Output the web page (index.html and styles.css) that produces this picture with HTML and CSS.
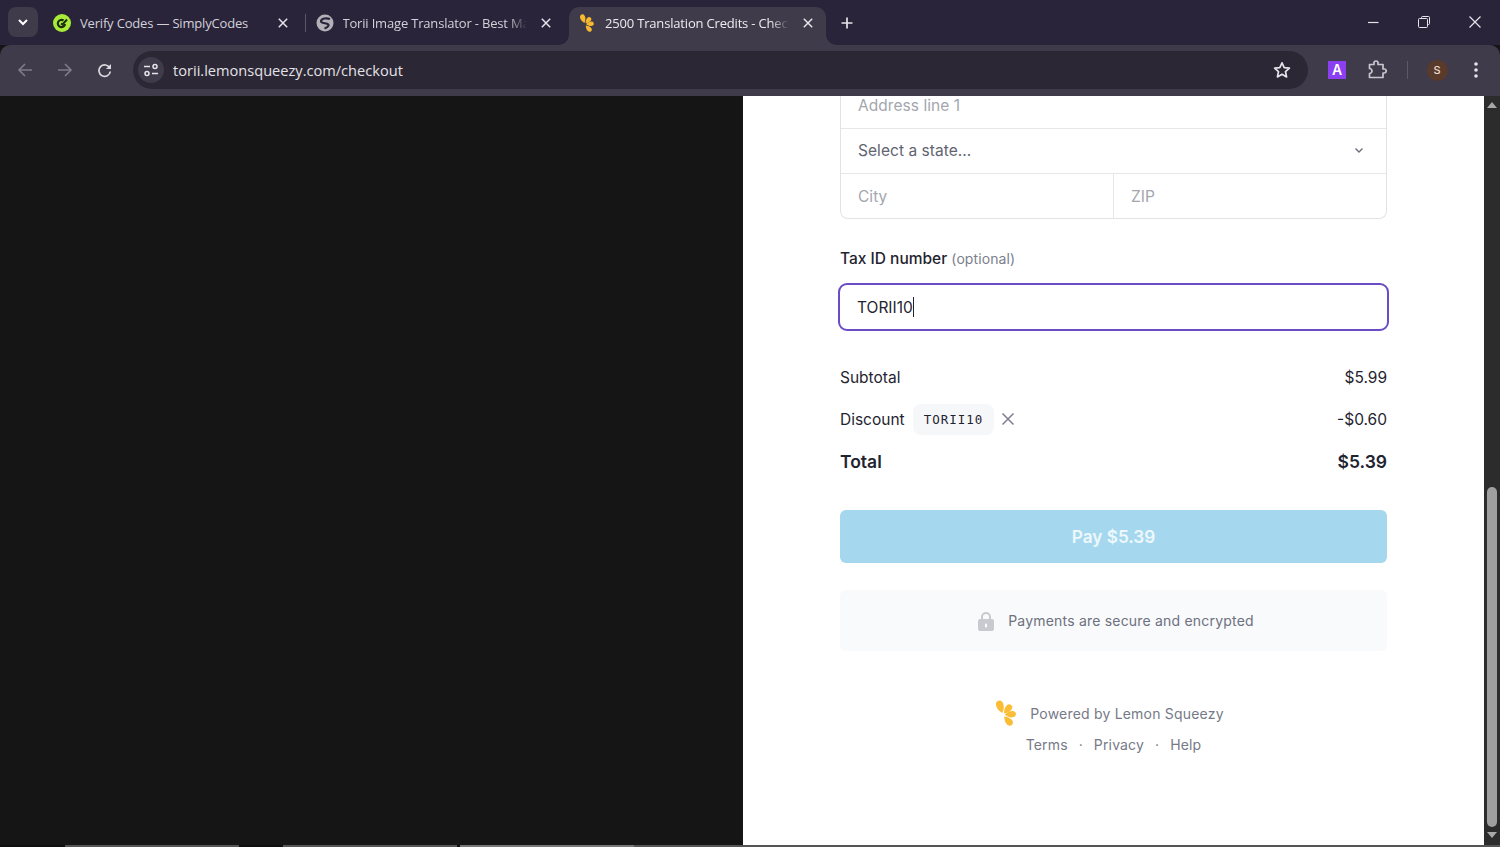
FILE: index.html
```html
<!DOCTYPE html>
<html lang="en">
<head>
    <meta charset="UTF-8">
    <title>2500 Translation Credits - Checkout</title>
    <link rel="stylesheet" href="styles.css">
</head>
<body>
    <!-- browser chrome -->
    <div class="tabstrip">
        <button class="tab-search">
            <svg width="12" height="12" viewBox="0 0 12 12"><path d="M2 4l4 4 4-4" fill="none" stroke="#fff" stroke-width="2"/></svg>
        </button>
        <div class="tabs">
            <div class="tab">
                <svg class="favicon" viewBox="0 0 18 18"><circle cx="9" cy="9" r="9" fill="#a8ec38"/><path d="M10.500 6.500A3.600 3.600 0 1 0 12 10" fill="none" stroke="#1d2a12" stroke-width="2.200"/><path d="M8 9.500l1.500 1L14 5.500" fill="none" stroke="#1d2a12" stroke-width="2"/></svg>
                <span class="tab-title">Verify Codes — SimplyCodes</span>
                <svg class="tab-close" width="10" height="10" viewBox="0 0 10 10"><path d="M.8.800l8.400 8.400M9.200.800L.8 9.200" stroke="#e6e4ea" stroke-width="1.500"/></svg>
            </div>
            <div class="tab tab-sep">
                <svg class="favicon" viewBox="0 0 18 18"><circle cx="9" cy="9" r="8.500" fill="#b2b1b7"/><path d="M14 5C10 3.500 5.500 4.500 5 7c-.4 2 3.500 2 6 2.800 2.500.8 2 3.200-2.500 4.700" fill="none" stroke="#29243a" stroke-width="2.200"/></svg>
                <span class="tab-title">Torii Image Translator - Best Ma</span>
                <svg class="tab-close" width="10" height="10" viewBox="0 0 10 10"><path d="M.8.800l8.400 8.400M9.200.800L.8 9.200" stroke="#e6e4ea" stroke-width="1.500"/></svg>
            </div>
            <div class="tab tab-active">
                <svg class="favicon" viewBox="0 0 20 26">
                    <g fill="#f7b92d">
                        <path transform="translate(7 15) rotate(-18) scale(1.100)" d="M0-2C-3-5-4.500-10-2.500-12.500C-1-14 1.500-14 2.500-12.500C4.500-10 3-5 0-2z"/>
                        <path transform="translate(7 15) rotate(39) scale(.95)" d="M0-2C-3-5-4.500-10-2.500-12.500C-1-14 1.500-14 2.500-12.500C4.500-10 3-5 0-2z"/>
                        <path transform="translate(7 15) rotate(85) scale(.95)" d="M0-2C-3-5-4.500-10-2.500-12.500C-1-14 1.500-14 2.500-12.500C4.500-10 3-5 0-2z"/>
                        <path transform="translate(7 15) rotate(138) scale(.98)" d="M0-2C-3-5-4.500-10-2.500-12.500C-1-14 1.500-14 2.500-12.500C4.500-10 3-5 0-2z"/>
                    </g>
                </svg>
                <span class="tab-title">2500 Translation Credits - Check</span>
                <svg class="tab-close" width="10" height="10" viewBox="0 0 10 10"><path d="M.8.800l8.400 8.400M9.200.800L.8 9.200" stroke="#e6e4ea" stroke-width="1.500"/></svg>
            </div>
        </div>
        <svg class="new-tab" width="14" height="14" viewBox="0 0 14 14"><path d="M7 1.500v11M1.500 7h11" stroke="#e6e4ea" stroke-width="1.700"/></svg>
        <div class="window-controls">
            <svg width="12" height="12" viewBox="0 0 12 12"><path d="M1 6.500h10.500" stroke="#e6e4ea" stroke-width="1.200"/></svg>
            <svg width="12" height="12" viewBox="0 0 12 12"><path d="M3.500 2.500V1.500q0-1 1-1h6q1 0 1 1v6q0 1-1 1h-1" fill="none" stroke="#e6e4ea"/><rect x="0.500" y="2.500" width="9" height="9" rx="1" fill="none" stroke="#e6e4ea"/></svg>
            <svg width="12" height="12" viewBox="0 0 12 12"><path d="M.5.500l11 11M11.500.500l-11 11" stroke="#e6e4ea" stroke-width="1.200"/></svg>
        </div>
    </div>
    <div class="toolbar">
        <div class="tool">
            <svg width="16" height="16" viewBox="0 0 16 16"><path d="M15 8H2M8 2L2 8l6 6" fill="none" stroke="#7f7c88" stroke-width="1.600"/></svg>
        </div>
        <div class="tool">
            <svg width="16" height="16" viewBox="0 0 16 16"><path d="M1 8h13M8 2l6 6-6 6" fill="none" stroke="#7f7c88" stroke-width="1.600"/></svg>
        </div>
        <div class="tool">
            <svg width="16" height="16" viewBox="0 0 16 16"><path d="M12.700 6A5.700 5.700 0 1 0 13.300 9.500" fill="none" stroke="#dcdae0" stroke-width="1.700"/><path d="M14 2v5H9z" fill="#dcdae0"/></svg>
        </div>
        <div class="omnibox">
            <span class="site-info">
                <svg width="16" height="16" viewBox="0 0 16 16"><g fill="none" stroke="#e6e4ea" stroke-width="1.500"><path d="M1 4.500h6M9 11.500h6"/><circle cx="12" cy="4.500" r="2"/><circle cx="4" cy="11.500" r="2"/></g></svg>
            </span>
            <span class="url">torii.lemonsqueezy.com/checkout</span>
            <svg class="star" width="18" height="18" viewBox="0 0 18 18"><path d="M9 1.800l2.200 4.800 5.200.6-3.900 3.500 1.100 5.200L9 13.300l-4.600 2.600 1.100-5.200-3.900-3.500 5.200-.6z" fill="none" stroke="#e6e4ea" stroke-width="1.700" stroke-linejoin="round"/></svg>
        </div>
        <div class="tool tool-ext"><span class="ext-a">A</span></div>
        <div class="tool tool-puzzle">
            <svg width="20" height="20" viewBox="0 0 20 20"><path d="M2.500 4.500h4.500V3a2 2 0 0 1 4 0v1.500h5v4.500h1.200a2 2 0 0 1 0 4h-1.200v4.500h-13.500V13.500a2.500 2.500 0 0 0 0-5z" fill="none" stroke="#c9c7ce" stroke-width="1.700" stroke-linejoin="round"/></svg>
        </div>
        <span class="tool-sep"></span>
        <div class="tool"><span class="avatar">S</span></div>
        <div class="tool tool-dots">
            <svg width="4" height="18" viewBox="0 0 4 18"><g fill="#e6e4ea"><circle cx="2" cy="3" r="1.800"/><circle cx="2" cy="9" r="1.800"/><circle cx="2" cy="15" r="1.800"/></g></svg>
        </div>
    </div>

    <!-- checkout page -->
    <div class="viewport">
        <div class="side-dark"></div>
        <div class="checkout">
            <div class="address-group">
                <div class="field field-clipped"><span class="placeholder">Address line 1</span></div>
                <div class="field field-select">
                    <span>Select a state...</span>
                    <svg width="10" height="10" viewBox="0 0 10 10"><path d="M1.500 3.500L5 7l3.500-3.500" fill="none" stroke="#6b6f7b" stroke-width="1.400"/></svg>
                </div>
                <div class="field-split">
                    <div class="field"><span class="placeholder">City</span></div>
                    <div class="field field-zip"><span class="placeholder">ZIP</span></div>
                </div>
            </div>

            <label class="tax-label">Tax ID number <span class="optional">(optional)</span></label>
            <div class="tax-input"><span>TORII10</span><i class="caret"></i></div>

            <div class="summary">
                <div class="summary-row">
                    <span>Subtotal</span>
                    <span>$5.99</span>
                </div>
                <div class="summary-row">
                    <span class="discount">
                        Discount
                        <code class="coupon">TORII10</code>
                        <svg width="14" height="14" viewBox="0 0 14 14"><path d="M1.500 1.500l11 11M12.500 1.500l-11 11" stroke="#7f7d92" stroke-width="1.500"/></svg>
                    </span>
                    <span>-$0.60</span>
                </div>
                <div class="summary-row summary-total">
                    <span>Total</span>
                    <span>$5.39</span>
                </div>
            </div>

            <button class="pay">Pay $5.39</button>

            <div class="secure">
                <svg width="18" height="20" viewBox="0 0 18 20"><path d="M5 9V6a4 4 0 0 1 8 0v3" fill="none" stroke="#c8cacf" stroke-width="2"/><rect x="1" y="8" width="16" height="12" rx="2" fill="#c8cacf"/><rect x="8" y="12.500" width="2" height="4" rx="1" fill="#fff"/></svg>
                <span>Payments are secure and encrypted</span>
            </div>

            <div class="powered">
                <svg width="20" height="26" viewBox="0 0 20 26">
                    <g fill="#fbbd35">
                        <path transform="translate(7 15) rotate(-18) scale(1.100)" d="M0-2C-3-5-4.500-10-2.500-12.500C-1-14 1.500-14 2.500-12.500C4.500-10 3-5 0-2z"/>
                        <path transform="translate(7 15) rotate(39) scale(.95)" d="M0-2C-3-5-4.500-10-2.500-12.500C-1-14 1.500-14 2.500-12.500C4.500-10 3-5 0-2z"/>
                        <path transform="translate(7 15) rotate(85) scale(.95)" d="M0-2C-3-5-4.500-10-2.500-12.500C-1-14 1.500-14 2.500-12.500C4.500-10 3-5 0-2z"/>
                        <path transform="translate(7 15) rotate(138) scale(.98)" d="M0-2C-3-5-4.500-10-2.500-12.500C-1-14 1.500-14 2.500-12.500C4.500-10 3-5 0-2z"/>
                    </g>
                </svg>
                <span>Powered by Lemon Squeezy</span>
            </div>
            <div class="legal">
                <a>Terms</a><span>·</span><a>Privacy</a><span>·</span><a>Help</a>
            </div>
        </div>
        <div class="scrollbar">
            <span class="arrow-up"></span>
            <span class="thumb"></span>
            <span class="arrow-down"></span>
        </div>
    </div>

    <!-- sliver of the taskbar -->
    <div class="taskbar">
        <span class="task-a"></span><span class="task-b"></span>
        <span class="task-c"></span><span class="task-b"></span>
        <span class="task-d"></span><span class="task-e"></span>
        <span class="task-f"></span>
    </div>
</body>
</html>
```

FILE: styles.css
```css
* {
    box-sizing: border-box;
}
body {
    margin: 0;
    height: 847px;
    overflow: hidden;
    background: #151515;
    font-family: Inter, sans-serif;
    color: #1f2430;
}

/* tab strip */
.tabstrip {
    display: flex;
    align-items: flex-start;
    height: 45px;
    background: #29243a;
    padding-top: 7px;
    padding-left: 8px;
}
.tab-search {
    width: 30px;
    height: 30px;
    border: none;
    border-radius: 8px;
    background: #3f3b4b;
    padding: 0;
    display: flex;
    align-items: center;
    justify-content: center;
}
.tabs {
    display: flex;
    gap: 5.500px;
    margin-left: 6px;
}
.tab {
    position: relative;
    display: flex;
    align-items: center;
    gap: 9px;
    width: 257px;
    height: 38px;
    padding: 0 9px 6px;
    border-radius: 10px 10px 0 0;
    font-family: "Open Sans", sans-serif;
    font-size: 13px;
    color: #d3d1d8;
}
.tab-active {
    background: #3f3b4b;
    color: #ecebef;
}
.tab-active::before,
.tab-active::after {
    content: "";
    position: absolute;
    bottom: 0;
    width: 10px;
    height: 10px;
    background: radial-gradient(circle at 0 0, transparent 9.500px, #3f3b4b 10px);
}
.tab-active::before {
    left: -10px;
}
.tab-active::after {
    right: -10px;
    transform: scaleX(-1);
}
.tab-sep::before {
    content: "";
    position: absolute;
    left: -2px;
    top: 7px;
    width: 1px;
    height: 18px;
    background: #5c586a;
}
.favicon {
    width: 18px;
    height: 18px;
    flex: none;
}
.tab-title {
    flex: 1;
    min-width: 0;
    white-space: nowrap;
    letter-spacing: -0.18px;
    -webkit-mask-image: linear-gradient(to right, #000 90%, transparent);
    mask-image: linear-gradient(to right, #000 90%, transparent);
}
.tab:first-child .tab-title {
    -webkit-mask-image: none;
    mask-image: none;
}
.tab-close {
    flex: none;
    margin: 0 4px 0 5px;
}
.new-tab {
    margin: 9px 0 0 14px;
}
.window-controls {
    display: flex;
    gap: 39px;
    margin-left: auto;
    padding: 9px 19px 0 0;
}

/* toolbar */
.toolbar {
    display: flex;
    align-items: center;
    height: 51px;
    padding: 0 4px 1px 5px;
    background: #3f3b4b;
    border-radius: 10px 10px 0 0;
}
.tool {
    width: 40px;
    height: 38px;
    flex: none;
    display: flex;
    align-items: center;
    justify-content: center;
}
.tool-ext {
    margin-left: 9px;
    margin-right: 1px;
}
.tool-puzzle svg {
    margin-left: -2px;
}
.tool-dots {
    margin-left: -1px;
}
.tool-sep {
    width: 1px;
    height: 18px;
    margin: 0 9px 0 9px;
    background: #5c586a;
}
.omnibox {
    flex: 1;
    display: flex;
    align-items: center;
    height: 38px;
    margin-left: 8px;
    padding: 0 17px 0 5px;
    border-radius: 19px;
    background: #2b2735;
}
.site-info {
    width: 26px;
    height: 26px;
    border-radius: 50%;
    background: #3f3b4b;
    display: flex;
    align-items: center;
    justify-content: center;
}
.url {
    flex: 1;
    margin-left: 9px;
    font-family: "Open Sans", sans-serif;
    font-size: 14.600px;
    color: #e4e2e8;
}
.ext-a {
    width: 18px;
    height: 18px;
    background: #8a3ff0;
    color: #fff;
    font-size: 14px;
    font-weight: 600;
    text-align: center;
    line-height: 18px;
}
.avatar {
    width: 21px;
    height: 21px;
    border-radius: 50%;
    background: #5a3a2a;
    color: #e8dcd2;
    font-size: 11px;
    font-weight: 500;
    text-align: center;
    line-height: 21px;
}

/* checkout page */
.viewport {
    display: flex;
    height: 749px;
}
.side-dark {
    width: 743px;
    background: #151515;
}
.checkout {
    flex: 1;
    background: #fff;
    padding: 0 97px;
    font-size: 15.500px;
    overflow: hidden;
}
.address-group {
    border: 1px solid #e2e3e6;
    border-top: none;
    border-radius: 0 0 8px 8px;
    color: #5f6470;
}
.field {
    display: flex;
    align-items: center;
    height: 44px;
    padding: 0 17px;
    letter-spacing: 0.05px;
}
.field-clipped {
    height: 33px;
    padding-bottom: 13px;
    align-items: flex-end;
    overflow: hidden;
    border-bottom: 1px solid #e6e7ea;
}
.field-select {
    height: 45px;
    padding-bottom: 2px;
    justify-content: space-between;
    border-bottom: 1px solid #e6e7ea;
    padding-right: 22px;
}
.field-split {
    display: flex;
}
.field-split .field {
    flex: 1;
}
.field-zip {
    border-left: 1px solid #e6e7ea;
}
.placeholder {
    color: #a3a6ae;
}
.tax-label {
    display: block;
    margin-top: 28px;
    line-height: 24px;
    font-weight: 500;
}
.optional {
    color: #7c808c;
    font-size: 14px;
    font-weight: 400;
    line-height: 1;
    letter-spacing: 0.1px;
}
.tax-input {
    display: flex;
    align-items: center;
    height: 48px;
    margin: 12px -2px 0;
    padding: 0 17px;
    border: 2px solid #6a4dc4;
    border-radius: 9px;
}
.caret {
    width: 1px;
    height: 20px;
    background: #1f2430;
}
.summary {
    margin-top: 25px;
}
.summary-row {
    display: flex;
    align-items: center;
    justify-content: space-between;
    height: 42px;
}
.discount {
    display: flex;
    align-items: center;
}
.coupon {
    margin: 0 7px 0 8px;
    padding: 0 11px;
    height: 31px;
    line-height: 31px;
    border-radius: 8px;
    background: #f6f7f9;
    font-family: "DejaVu Sans Mono", monospace;
    font-size: 12.500px;
    letter-spacing: 1px;
}
.summary-total {
    font-size: 17.500px;
    font-weight: 600;
}
.pay {
    display: block;
    width: 100%;
    height: 53px;
    margin-top: 28px;
    border: none;
    border-radius: 6px;
    background: #a5d8ef;
    color: #eef8fc;
    font-family: inherit;
    font-size: 17.200px;
    font-weight: 600;
}
.secure {
    display: flex;
    align-items: center;
    justify-content: center;
    gap: 13px;
    height: 61px;
    margin-top: 27px;
    padding-left: 4px;
    border-radius: 6px;
    background: #f9fafb;
    color: #6d7180;
    font-size: 14px;
    letter-spacing: 0.2px;
}
.powered {
    display: flex;
    align-items: center;
    justify-content: center;
    gap: 14px;
    height: 26px;
    margin-top: 49px;
    padding-right: 7px;
    color: #767a88;
    font-size: 14px;
    letter-spacing: 0.2px;
}
.legal {
    display: flex;
    justify-content: center;
    gap: 11px;
    margin-top: 7px;
    line-height: 24px;
    color: #767a88;
    font-size: 14px;
    letter-spacing: 0.15px;
}

/* scrollbar */
.scrollbar {
    display: flex;
    flex-direction: column;
    align-items: center;
    width: 16px;
    background: #2c2c2c;
}
.arrow-up,
.arrow-down {
    width: 0;
    height: 0;
    border-left: 5px solid transparent;
    border-right: 5px solid transparent;
}
.arrow-up {
    margin-top: 6px;
    border-bottom: 6px solid #a8a8a8;
}
.arrow-down {
    margin-top: 5px;
    border-top: 6px solid #a8a8a8;
}
.thumb {
    width: 10px;
    height: 340px;
    margin-top: 379px;
    border-radius: 5px;
    background: #9f9f9f;
}

/* bottom edge */
.taskbar {
    display: flex;
    height: 2px;
}
.task-a { width: 65px; background: #0f0f0f; }
.task-b { width: 174px; background: #555; }
.task-c { width: 44px; background: #0f0f0f; }
.task-d { width: 3px; background: #0f0f0f; }
.task-e { width: 174px; background: #777; }
.task-f { flex: 1; background: #555; }
```
